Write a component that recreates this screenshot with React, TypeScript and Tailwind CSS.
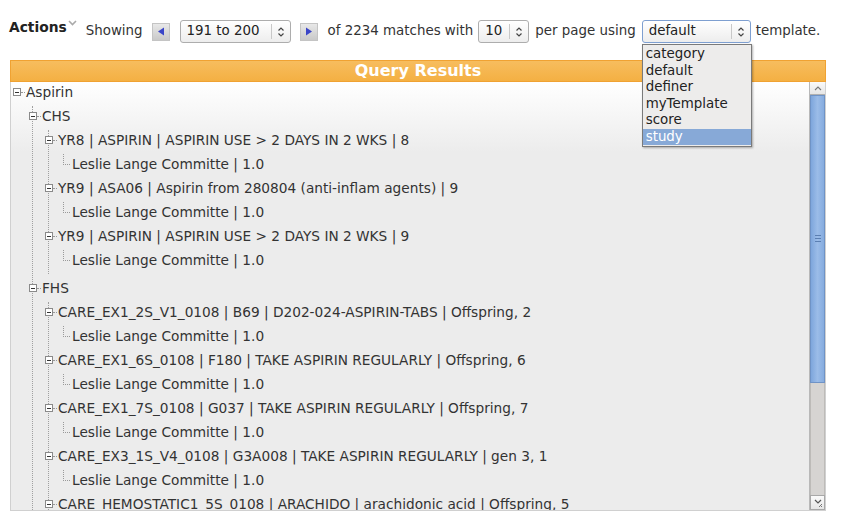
import React from 'react'

type TreeNode = { label: string; children?: TreeNode[] }

const leslie = { label: 'Leslie Lange Committe | 1.0' }

const tree: TreeNode = {
  label: 'Aspirin',
  children: [
    {
      label: 'CHS',
      children: [
        { label: 'YR8 | ASPIRIN | ASPIRIN USE > 2 DAYS IN 2 WKS | 8', children: [leslie] },
        { label: 'YR9 | ASA06 | Aspirin from 280804 (anti-inflam agents) | 9', children: [leslie] },
        { label: 'YR9 | ASPIRIN | ASPIRIN USE > 2 DAYS IN 2 WKS | 9', children: [leslie] },
      ],
    },
    {
      label: 'FHS',
      children: [
        { label: 'CARE_EX1_2S_V1_0108 | B69 | D202-024-ASPIRIN-TABS | Offspring, 2', children: [leslie] },
        { label: 'CARE_EX1_6S_0108 | F180 | TAKE ASPIRIN REGULARLY | Offspring, 6', children: [leslie] },
        { label: 'CARE_EX1_7S_0108 | G037 | TAKE ASPIRIN REGULARLY | Offspring, 7', children: [leslie] },
        { label: 'CARE_EX3_1S_V4_0108 | G3A008 | TAKE ASPIRIN REGULARLY | gen 3, 1', children: [leslie] },
        { label: 'CARE_HEMOSTATIC1_5S_0108 | ARACHIDO | arachidonic acid | Offspring, 5', children: [leslie] },
      ],
    },
  ],
}

const templates = ['category', 'default', 'definer', 'myTemplate', 'score', 'study']

function UpDown() {
  return (
    <svg width="8" height="12" viewBox="0 0 8 12" className="mx-[5px]">
      <path d="M1.5 4.5 L4 2 L6.5 4.5 M1.5 7.5 L4 10 L6.5 7.5" fill="none" stroke="#444" strokeWidth="1.2" />
    </svg>
  )
}

function Select({ value, className }: { value: string; className: string }) {
  return (
    <div
      className={
        'flex h-[23px] items-center rounded-[3px] border bg-[linear-gradient(#ffffff,#ededed)] shadow-[inset_0_1px_0_#fff] ' +
        className
      }
    >
      <span className="flex-1 pl-[6px] text-[#222]">{value}</span>
      <span className="h-[15px] border-l border-[#c8c8c8]" />
      <UpDown />
    </div>
  )
}

function PageButton({ dir }: { dir: 'left' | 'right' }) {
  return (
    <div className="flex h-[18px] w-[18px] items-center justify-center border border-[#c4c4c4] bg-[linear-gradient(#e8e8e8,#c9c9c9)]">
      <svg width="8" height="9" viewBox="0 0 8 9">
        {dir === 'left' ? (
          <path d="M7 0.5 L7 8.5 L1 4.5 Z" fill="#3a45c8" />
        ) : (
          <path d="M1 0.5 L1 8.5 L7 4.5 Z" fill="#3a45c8" />
        )}
      </svg>
    </div>
  )
}

function Expander() {
  return (
    <span className="mt-[6px] flex h-[8px] w-[8px] shrink-0 items-center justify-center border border-[#8a8a8a] bg-white">
      <span className="h-px w-[4px] bg-[#333]" />
    </span>
  )
}

function Branch({ node, level }: { node: TreeNode; level: number }) {
  const extra = node.label === 'FHS' ? ' mt-[4px]' : ''
  return (
    <div className={extra}>
      <div className={'flex h-[24px] items-start ' + (level === 0 ? 'ml-[2px]' : '-ml-[4px]')}>
        <Expander />
        <span className="mt-[10px] w-[4px] shrink-0 border-t border-dotted border-[#999]" />
        <span className="ml-px whitespace-nowrap leading-[20px]">{node.label}</span>
      </div>
      {node.children && node.children[0].children ? (
        <div className={'border-l border-dotted border-[#a0a0a0] ' + (level === 0 ? 'ml-[21px]' : 'ml-[15px]')}>
          {node.children.map((c, i) => (
            <Branch key={i} node={c} level={level + 1} />
          ))}
        </div>
      ) : (
        node.children?.map((c, i) => (
          <div key={i} className="flex h-[24px] items-start pl-[14px]">
            <span className="h-[11px] w-[7px] shrink-0 border-b border-l border-dotted border-[#999]" />
            <span className="ml-[2px] whitespace-nowrap leading-[20px]">{c.label}</span>
          </div>
        ))
      )}
    </div>
  )
}

function Scrollbar() {
  return (
    <div className="flex w-[16px] shrink-0 flex-col border-l border-[#b8b8b8] bg-[#d6d4d2]">
      <div className="flex h-[13px] items-center justify-center border-b border-[#b0b0b0] bg-[linear-gradient(#fafafa,#e6e6e6)]">
        <svg width="8" height="5" viewBox="0 0 8 5">
          <path d="M1 4 L4 1 L7 4" fill="none" stroke="#777" strokeWidth="1.1" />
        </svg>
      </div>
      <div className="flex h-[288px] flex-col items-center justify-end border border-[#6f93c6] bg-[linear-gradient(to_right,#7ea6dc,#9bbce8,#86acdf)] pb-[140px]">
        <span className="mb-[2px] h-px w-[6px] bg-[#5b7fb2]" />
        <span className="mb-[2px] h-px w-[6px] bg-[#5b7fb2]" />
        <span className="h-px w-[6px] bg-[#5b7fb2]" />
      </div>
      <div className="flex-1 border-x border-[#bdbbb8]" />
      <div className="flex h-[15px] items-center justify-center border border-[#a8a8a8] bg-[linear-gradient(#fafafa,#e6e6e6)]">
        <svg width="10" height="9" viewBox="0 0 10 9">
          <path d="M2 2 L5 5 L8 2" fill="none" stroke="#555" strokeWidth="1.2" />
          <path d="M9 6 L6 9 M9 8 L8 9" stroke="#777" strokeWidth="1" />
        </svg>
      </div>
    </div>
  )
}

export default function App() {
  return (
    <div className="h-[516px] w-[841px] overflow-hidden bg-white font-['DejaVu_Sans',sans-serif] text-[13.4px] text-[#333]">
      {/* toolbar */}
      <div className="flex h-[43px] items-center pl-[9px] pt-[20px]">
        <span className="-mt-[3px] self-start text-[13.8px] font-bold leading-[20px] text-[#222]">Actions</span>
        <svg width="9" height="6" viewBox="0 0 9 6" className="ml-px self-start">
          <path d="M1 1 L4.5 4.5 L8 1" fill="none" stroke="#aaa" strokeWidth="1.6" />
        </svg>
        <span className="ml-[9px]">Showing</span>
        <span className="ml-[9px]">
          <PageButton dir="left" />
        </span>
        <Select value="191 to 200" className="ml-[10px] w-[111px] border-[#adadad]" />
        <span className="ml-[9px]">
          <PageButton dir="right" />
        </span>
        <span className="ml-[10px]">of 2234 matches with</span>
        <Select value="10" className="ml-[5px] w-[51px] border-[#adadad]" />
        <span className="ml-[6px]">per page using</span>
        <div className="relative ml-[6px]">
          <Select value="default" className="w-[109px] border-[#7e9fd0]" />
          <div className="absolute left-0 top-full z-10 mt-px w-[110px] border border-[#7a7a7a] bg-[#edeceb] py-px shadow-[1px_1px_2px_rgba(0,0,0,0.3)]">
            {templates.map((t) => (
              <div
                key={t}
                className={
                  'h-[16.5px] pl-[3px] leading-[16px] ' + (t === 'study' ? 'bg-[#87a9d7] text-white' : 'text-[#222]')
                }
              >
                {t}
              </div>
            ))}
          </div>
        </div>
        <span className="ml-[5px]">template.</span>
      </div>

      {/* results panel */}
      <div className="ml-[10px] mt-[17px] w-[816px] border border-t-0 border-[#d0d0d0]">
        <div className="-mx-px flex h-[22px] items-center justify-center border border-[#f0a232] bg-[linear-gradient(#f7bd5e,#f4b043)] text-[16px] font-bold text-white">
          Query Results
        </div>
        <div className="flex h-[428px]">
          <div className="flex-1 overflow-hidden bg-[linear-gradient(to_bottom,#ffffff,#ececec_70px,#ececec)] text-[13.7px]">
            <Branch node={tree} level={0} />
          </div>
          <Scrollbar />
        </div>
      </div>
    </div>
  )
}
